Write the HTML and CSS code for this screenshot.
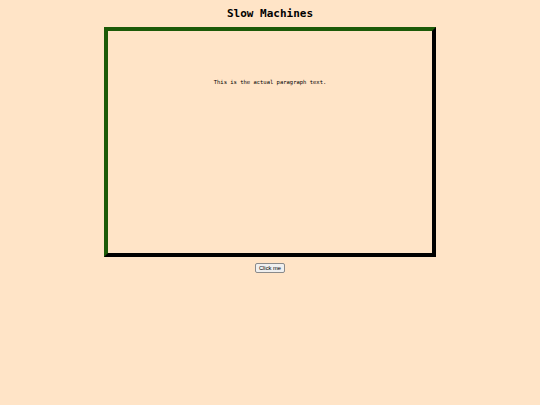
FILE: index.html
```html
<!DOCTYPE html>
<html>
<head>
<meta charset="utf-8">
<link rel="stylesheet" href="styles.css">
</head>
<body>
<h1 class="title">Slow Machines</h1>
<div class="frame">
  <p class="para">This is the actual paragraph text.</p>
</div>
<div class="actions"><button class="btn">Click me</button></div>
</body>
</html>
```
FILE: styles.css
```css
html, body {
  margin: 0;
  padding: 0;
  background: #ffe4c7;
}
body {
  font-family: "DejaVu Sans Mono", monospace;
  color: #000;
}
.title {
  margin: 0;
  padding-top: 7px;
  height: 20px;
  font-size: 11px;
  line-height: 14px;
  font-weight: bold;
  text-align: center;
}
.frame {
  width: 324px;
  height: 222px;
  margin: 0 auto;
  border: 4px solid;
  border-color: #1c5a08 #000 #000 #1c5a08;
}
.para {
  margin: 47px 0 0;
  font-size: 5.5px;
  line-height: 8px;
  text-align: center;
}
.actions {
  display: flex;
  justify-content: center;
  padding-top: 6px;
}
.btn {
  font-family: "Liberation Sans", Arial, sans-serif;
  font-size: 5.8px;
  padding: 1px 3px;
  height: 10px;
  line-height: 6px;
  color: #000;
  background: #efefef;
  border: 1px solid #8a8a8a;
  border-radius: 2px;
}
```
